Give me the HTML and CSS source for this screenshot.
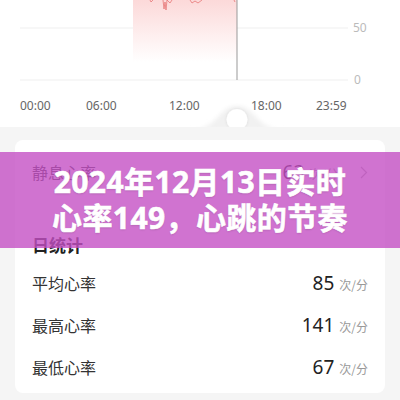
FILE: index.html
```html
<!DOCTYPE html>
<html lang="zh-CN">
<head>
    <meta charset="UTF-8">
    <meta name="viewport" content="width=device-width, initial-scale=1.0">
    <title>心率</title>
    <link rel="stylesheet" href="styles.css">
</head>
<body>

    <div class="chart">
        <svg width="400" height="127" viewBox="0 0 400 127">
            <defs>
                <linearGradient id="area" x1="0" y1="0" x2="0" y2="1">
                    <stop offset="0" stop-color="#fcd9d9"/>
                    <stop offset="1" stop-color="#ffffff"/>
                </linearGradient>
                <filter id="soft" x="-50%" y="-50%" width="200%" height="200%">
                    <feDropShadow dx="0" dy="0" stdDeviation="1.5" flood-color="#000" flood-opacity="0.1"/>
                </filter>
                <filter id="blur" x="-20%" y="-50%" width="140%" height="200%">
                    <feGaussianBlur stdDeviation="2"/>
                </filter>
            </defs>

            <line class="grid" x1="20" y1="28" x2="348" y2="28"/>
            <line class="grid" x1="20" y1="80" x2="348" y2="80"/>
            <text class="ylabel" x="353" y="32">50</text>
            <text class="ylabel" x="354" y="84">0</text>

            <rect x="133" y="0" width="104" height="62" fill="url(#area)"/>
            <path class="pulse" d="M150 0 L151 2 L153 0 M163 0 L164 9 L165 2 L166 10 L167 0 L170 3 L172 0 M190 0 L192 3 L195 1 L198 3 L202 0 M234 0 L235 2"/>
            <line class="cursor" x1="237" y1="0" x2="237" y2="80"/>

            <text class="xlabel" x="20" y="110">00:00</text>
            <text class="xlabel" x="86" y="110">06:00</text>
            <text class="xlabel" x="169" y="110">12:00</text>
            <text class="xlabel" x="251" y="110">18:00</text>
            <text class="xlabel" x="316" y="110">23:59</text>

            <path class="bump" d="M190 130 C218 130 218 106 237 106 C256 106 256 130 284 130 Z" filter="url(#blur)"/>
            <circle cx="237" cy="119.5" r="10.5" fill="#fff" filter="url(#soft)"/>
        </svg>
    </div>

    <div class="main">
        <div class="card">
            <div class="row">
                <span class="label">静息心率</span>
                <span class="value">
                    <span class="num">63</span>
                    <span class="unit">次/分</span>
                    <svg class="chevron" width="8" height="13" viewBox="0 0 8 13">
                        <path d="M1 1 L6.5 6.5 L1 12" fill="none" stroke="#aaa" stroke-width="1.2"/>
                    </svg>
                </span>
            </div>

            <div class="section-title">日统计</div>

            <div class="row stat">
                <span class="label">平均心率</span>
                <span class="value"><span class="num">85</span><span class="unit">次/分</span></span>
            </div>
            <div class="row stat">
                <span class="label">最高心率</span>
                <span class="value"><span class="num">141</span><span class="unit">次/分</span></span>
            </div>
            <div class="row stat">
                <span class="label">最低心率</span>
                <span class="value"><span class="num">67</span><span class="unit">次/分</span></span>
            </div>
        </div>
    </div>

    <div class="banner">
        <h1>2024年12月13日实时<br>心率149，心跳的节奏</h1>
    </div>

</body>
</html>
```

FILE: styles.css
```css
body {
    margin: 0;
    width: 400px;
    height: 400px;
    overflow: hidden;
    background: #f5f5f5;
    font-family: "Noto Sans CJK SC", "Noto Sans", sans-serif;
    color: #333;
    position: relative;
}

.chart {
    background: #fff;
    height: 127px;
}

.chart svg {
    display: block;
}

.grid {
    stroke: #efefef;
    stroke-width: 1;
}

.ylabel {
    font-family: "Noto Sans", sans-serif;
    font-size: 12px;
    fill: #bbb;
}

.xlabel {
    font-family: "Noto Sans", sans-serif;
    font-size: 12px;
    fill: #666;
}

.pulse {
    fill: none;
    stroke: #e46a6a;
    stroke-width: 0.7;
}

.cursor {
    stroke: #999;
    stroke-width: 1;
}

.bump {
    fill: #f1f1f1;
}

.main {
    padding: 13px 15px 0;
}

.card {
    background: #fff;
    border-radius: 8px;
    padding: 10px 17px 5px;
}

.row {
    display: flex;
    justify-content: space-between;
    align-items: center;
    height: 44px;
}

.row.stat {
    height: 42px;
}

.section-title + .row {
    margin-top: 3px;
}

.label {
    font-size: 16px;
    color: #333;
}

.value {
    display: flex;
    align-items: baseline;
}

.num {
    font-family: "Noto Sans", sans-serif;
    font-size: 19px;
    color: #222;
}

.unit {
    font-size: 12px;
    color: #999;
    margin-left: 5px;
}

.chevron {
    margin-left: 22px;
    align-self: center;
}

.section-title {
    margin-top: 37px;
    height: 28px;
    line-height: 28px;
    font-size: 17px;
    font-weight: 600;
    color: #222;
}

.banner {
    position: absolute;
    left: 0;
    top: 152px;
    width: 400px;
    height: 96px;
    background: rgba(196, 80, 196, 0.8);
    display: flex;
    align-items: center;
    justify-content: center;
}

.banner h1 {
    margin: 0;
    text-align: center;
    color: #fff;
    font-family: "Noto Sans", "Noto Sans CJK SC", sans-serif;
    font-size: 30px;
    font-weight: 700;
    line-height: 36px;
    letter-spacing: 0.4px;
    -webkit-text-stroke: 0.6px #fff;
    text-shadow: 0 1px 2px rgba(0, 0, 0, 0.15);
}
```
